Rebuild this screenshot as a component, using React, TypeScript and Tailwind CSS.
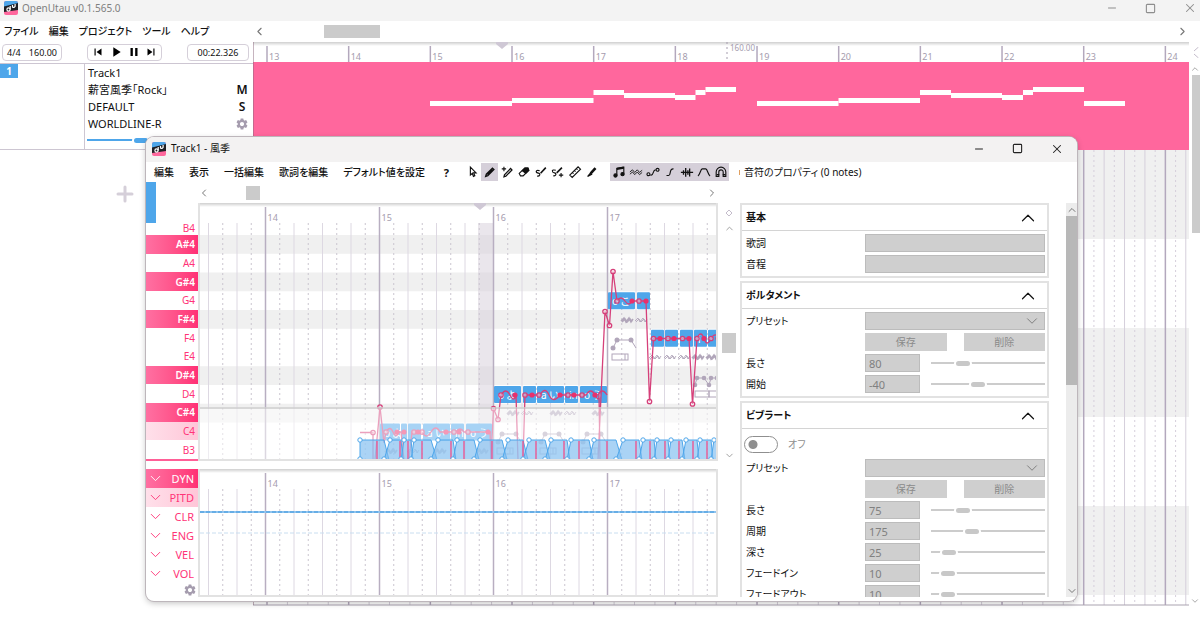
import React, { useState } from 'react';
import { ChevronDown, ChevronLeft, ChevronRight, ChevronUp, Minus, Plus, Square, X } from 'lucide-react';
import { MdPause, MdPlayArrow, MdSettings, MdSkipNext, MdSkipPrevious } from 'react-icons/md';

const MAIN_MENU = ['ファイル', '編集', 'プロジェクト', 'ツール', 'ヘルプ'];
const EDITOR_MENU = ['編集', '表示', '一括編集', '歌詞を編集', 'デフォルト値を設定'];
const KEYS = ['A#4', 'A4', 'G#4', 'G4', 'F#4', 'F4', 'E4', 'D#4', 'D4', 'C#4', 'C4', 'B3'];
const EXPRESSIONS = ['DYN', 'PITD', 'CLR', 'ENG', 'VEL', 'VOL'];

// Song timeline, one bar is BAR px wide
const BAR = 81.67;
const FIRST_BAR_X = 14;
const PART_NOTES = [
  [177, 59, 259], [259, 56, 340.5], [340.5, 48, 371], [371, 51, 422], [422, 53, 442.5],
  [442.5, 48, 452.5], [452.5, 45, 483], [504, 59, 585.5], [585.5, 56, 667], [667, 48, 698],
  [698, 51, 749], [749, 53, 770], [770, 48, 780], [780, 45, 831], [831, 59, 872],
];

// Piano roll
const ROLL_BEAT = 28.5;
const ROW = 18.75;
const ROLL_NOTES = [
  { x: 182, w: 20, row: 10, lyric: 'o よ' },
  { x: 203, w: 6, row: 10 },
  { x: 210, w: 13, row: 10 },
  { x: 225, w: 27, row: 10, lyric: 'a い' },
  { x: 253, w: 13, row: 10, lyric: 'in' },
  { x: 268, w: 26, row: 10, lyric: 'o う' },
  { x: 296, w: 27, row: 8, lyric: 'o よ' },
  { x: 325, w: 13, row: 8 },
  { x: 339, w: 27, row: 8, lyric: 'a い' },
  { x: 367, w: 13, row: 8, lyric: 'in' },
  { x: 382, w: 27, row: 8, lyric: 'o う' },
  { x: 410, w: 27, row: 3, lyric: 'o こ' },
  { x: 439, w: 13, row: 3 },
  { x: 453, w: 13, row: 5 },
  { x: 467, w: 13, row: 5 },
  { x: 482, w: 13, row: 5 },
  { x: 496, w: 13, row: 5, lyric: 'i' },
  { x: 510, w: 13, row: 5 },
];

const PITCH_LINES = [
  'M162 229.5H175V257',
  'M177 257L182 204L186 240L188 229q4 -7 7 0t6 0L203 229L206 257M211 257L214 229H224q4 8 9 0t9 0H258q4 -6 8 0H292L293 257',
  'M293 257L295.500 205.500L300 216.500L303 192q5 -8 9 0t6 0L320 257M325 257L327 192H342q5 -9 9 0t11 0H388q5 -8 9 0t4 -1L402 257M400 257L407 108.500L411.500 122.500L415 68.500L419 98q4 -6 8 0t7 0H448L451.500 198.500L455.500 135.500H491L494.500 201L499 135.500q4 -9 7 0t7 0q5 -8 9 2',
  'M409 192q-5 -8 -9 0',
];
const OPEN_POINTS = [
  [175, 229.5], [182, 204], [188, 229], [216, 229], [224, 229], [256, 229], [270, 229], [295.5, 205.5], [300, 216.5],
  [303, 192], [327, 192], [341, 192], [370, 192], [384, 192], [407, 108.5], [411.5, 122.5], [415, 68.5], [419, 98],
  [441, 98], [451.5, 198.5], [455.5, 135.5], [470, 135.5], [484.5, 135.5], [494.5, 201], [499, 135.5], [513, 135.5],
];
const SOLID_POINTS = [
  [199, 229], [206, 229], [220, 229], [248, 229], [261, 229], [290, 229], [317, 192], [334, 192], [362, 192],
  [376, 192], [397, 192], [434, 98], [448, 98], [462, 135.5], [476, 135.5], [491, 135.5], [506, 135.5], [520, 135.5],
];

const ENV_BOTTOM = [162, 186, 203, 213, 233, 255, 276, 304, 325, 347, 369, 391, 418, 441, 456, 470, 484, 499, 513, 530];
const ENV_TOP = [162, 192, 206, 216, 240, 259, 282, 310, 331, 353, 373, 396, 425, 445, 459, 473, 488, 502, 516, 534];
const PHONEME_MARKS = [179, 202, 210, 224, 253, 266, 294, 325, 338, 366, 381, 409, 438, 452, 467, 481, 495, 509];
// x, y and whether the vibrato is switched on for the note
const VIBRATOS: [number, number, boolean][] = [
  [429, 117, true], [443, 117, false], [457, 154, false], [472, 154, false], [486, 154, false], [500, 154, true],
  [514, 154, true], [315, 210, true], [329, 210, false], [358, 210, true], [372, 210, false], [400, 210, true],
  [193, 248, true], [215, 248, false], [242, 248, true], [284, 248, true],
];

const range = (n: number) => Array.from({ length: n }, (_, i) => i);

const AppIcon: React.FC = () => (
  <svg width="14" height="14" viewBox="0 0 14 14" className="shrink-0">
    <rect width="14" height="14" rx="2" fill="#ff679d" />
    <path d="M0 7V2q0-2 2-2h10q2 0 2 2v2z" fill="#4ea6ea" />
    <path d="M0 5.500L14 2v7L0 11z" fill="#1f1f25" />
    <circle cx="4.500" cy="8.500" r="1.600" fill="none" stroke="#fff" strokeWidth="1.200" />
    <path d="M6.200 8.500V5M8.500 4v2q1.600 1 2.600-.6V3" fill="none" stroke="#fff" strokeWidth="1.200" />
  </svg>
);

const WindowButtons: React.FC<{ color: string; edge: string }> = ({ color, edge }) => (
  <div className={`ml-auto flex items-center gap-[27px] ${color} ${edge}`}>
    <button aria-label="Minimize"><Minus size={12} strokeWidth={2} /></button>
    <button aria-label="Maximize"><Square size={11} strokeWidth={2.4} /></button>
    <button aria-label="Close"><X size={14} strokeWidth={1.8} /></button>
  </div>
);

const TOOLS: { name: string; art: React.ReactNode }[] = [
  { name: 'Select', art: <path d="M5 2.500v9l2.200-2 1.300 3.500 1.600-.7-1.400-3.300h2.800z" /> },
  { name: 'Pencil', art: <path d="M3 13l.8-2.500L10.800 3.500l1.700 1.700L5.500 12.200zM5 11l6-6" strokeWidth="1.500" /> },
  { name: 'Pencil plus', art: <><path d="M4.500 13.500l.6-2.200 7-7.300 1.600 1.600-7 7.200z" strokeWidth="1.400" /><path d="M4.500 2v5M2 4.500h5M8 2.500h.1" /></> },
  { name: 'Eraser', art: <><path d="M2.500 9.500L9 3.500h3.500l1 2.500-6.500 6.500H4z" /><path d="M6 6.500L9 3.500h3.500l1 2.500-3.500 3.500z" fill="currentColor" /></> },
  { name: 'Curve', art: <><path d="M6.500 6.500C1 5 2 9 5 9.300s1.500 4-1.500 3.200" /><path d="M7.500 9.500l6-6.500" strokeWidth="1.800" /></> },
  { name: 'Curve plus', art: <><path d="M5.500 6C0 4.500 1 8.500 4 9s1.500 4-1.500 3.200" /><path d="M6.500 9l6-6" strokeWidth="1.800" /><path d="M11.500 9v5M9 11.500h5" /></> },
  { name: 'Ruler', art: <path d="M2 11.500L11.500 2l2.800 2.800-9.500 9.500zM5 8.500l1.300 1.300M7.300 6.200l1.300 1.300M9.600 4l1.300 1.300" /> },
  { name: 'Knife', art: <><path d="M6.500 9.500l5.500-6" strokeWidth="3" /><path d="M3 13l3-3.500 1.500 1.200z" fill="currentColor" /></> },
];

const VIEWS: { name: string; art: React.ReactNode }[] = [
  { name: 'Notes', art: <><path d="M5.500 12V4l8-1.500v8" /><path d="M5.500 4.500l8-1.500" strokeWidth="2.600" /><circle cx="4" cy="12" r="1.800" fill="currentColor" /><circle cx="12" cy="10.500" r="1.800" fill="currentColor" /></> },
  { name: 'Vibrato', art: <path d="M1 8l3-2.500 2.500 3 3-3 2.500 3 3-2.500M1 10.500l3-2.500 2.500 3 3-3 2.500 3 3-2.500" strokeWidth="1" /> },
  { name: 'Pitch', art: <><circle cx="2.800" cy="10.500" r="1.700" /><circle cx="13.200" cy="5.500" r="1.700" /><path d="M5 11.500h1c3 0 1.500-6 5-6" /></> },
  { name: 'Final pitch', art: <path d="M4 12h2.500c3 0 0-8 5.500-7.500" /> },
  { name: 'Waveform', art: <path d="M1 8.500h14M4 6v5M6.500 3.500v10M9 6v5M11 4v9" strokeWidth="1.500" /> },
  { name: 'Envelope', art: <path d="M1 12.500c2.500-1 3-8 5-8h4c2 0 2.500 7 5 8" /> },
  { name: 'Snap', art: <><path d="M2.500 13V8a5.500 5.500 0 0 1 11 0v5h-3V8a2.500 2.500 0 0 0-5 0v5z" /><path d="M3 11h3M10 11h3" /></> },
];

const ToolIcon: React.FC<{ children: React.ReactNode }> = ({ children }) => (
  <svg width="14" height="14" viewBox="0 0 16 16" fill="none" stroke="currentColor" strokeWidth="1.3">
    {children}
  </svg>
);

const SongTimeline: React.FC = () => (
  <svg className="block h-full w-full" role="img" aria-label="Song timeline">
    <defs>
      <linearGradient id="shade" x1="0" y1="0" x2="0" y2="1">
        <stop offset="0" stopColor="#cfcfcf" />
        <stop offset="1" stopColor="#fff" />
      </linearGradient>
    </defs>
    {[0, 2, 4].map(i => (
      <rect key={i} x="0" y={108 + i * 89} width="100%" height="89" fill="#f0f0f0" />
    ))}
    {range(140).map(i => (
      <line
        key={i}
        x1={FIRST_BAR_X - BAR + i * (BAR / 8)}
        x2={FIRST_BAR_X - BAR + i * (BAR / 8)}
        y1="108"
        y2="563"
        stroke={i % 8 === 0 ? '#b3a8bd' : '#d5cfdb'}
        strokeWidth={i % 8 === 0 ? 1.5 : 1}
        strokeDasharray={i % 2 ? '2 3' : undefined}
      />
    ))}
    {range(12).map(i => (
      <g key={i}>
        <line x1={FIRST_BAR_X + i * BAR} x2={FIRST_BAR_X + i * BAR} y1="0" y2="20" stroke="#b3a8bd" strokeWidth="1.500" />
        <text x={FIRST_BAR_X + 2 + i * BAR} y="18" fontSize="9" fill="#a59cae">{13 + i}</text>
      </g>
    ))}
    <rect width="100%" height="4" fill="url(#shade)" />
    <path d="M243 0h12v2l-6 5-6-5z" fill="#cfc8d5" />
    <line x1="474" x2="474" y1="0" y2="20" stroke="#a59cae" strokeDasharray="2 3" />
    <text x="477" y="9" fontSize="8" fill="#a59cae">160.00</text>
    <rect y="20" width="100%" height="88" fill="#ff679d" />
    {PART_NOTES.map(([x1, y, x2]) => (
      <rect key={x1} x={x1} y={y} width={x2 - x1} height="5" fill="#fff" />
    ))}
    <line x1="0" x2="100%" y1="563" y2="563" stroke="#aaa3b0" />
    <line x1="0.500" x2="0.500" y1="0" y2="563" stroke="#8d6a80" strokeOpacity=".5" />
  </svg>
);

const RollGrid: React.FC<{ top: number; bottom: number }> = ({ top, bottom }) => (
  <>
    {range(39).map(i => {
      const x = 65.5 - ROLL_BEAT * 2 + i * (ROLL_BEAT / 2);
      const isBar = i % 8 === 4;
      return (
        <g key={i}>
          <line
            x1={x}
            x2={x}
            y1={isBar ? 0 : top}
            y2={bottom}
            stroke={isBar ? '#b8aec1' : i % 2 ? '#cac5cf' : '#ddd8e2'}
            strokeWidth={isBar ? 1.5 : 1}
            strokeDasharray={i % 2 ? '2 3' : undefined}
          />
          {isBar && <text x={x + 2} y={top - 2} fontSize="9" fill="#a59cae">{14 + (i - 4) / 8}</text>}
        </g>
      );
    })}
  </>
);

const PianoRoll: React.FC = () => (
  <svg className="block h-[258px] w-full border-x-2 border-b-2 border-[#e2e2e2]" role="img" aria-label="Piano roll">
    {[0, 2, 4, 7, 9].map(r => (
      <rect key={r} y={32 + r * ROW} width="100%" height={ROW} fill="#f0f0f0" />
    ))}
    <rect x="278" y="20" width="15" height="238" fill="#d8d2dc" fillOpacity=".55" />
    <RollGrid top={20} bottom={258} />
    <rect width="100%" height="4" fill="url(#shade)" />
    <path d="M274 0h12v2l-6 5-6-5z" fill="#cfc8d5" />
    {ROLL_NOTES.map(n => (
      <g key={n.x}>
        <rect x={n.x - 2} y={33 + n.row * ROW} width={n.w} height="17" rx="1" fill="#4ea6ea" />
        {n.lyric && (
          <text x={n.x + 2} y={46 + n.row * ROW} fontSize="10" fill="#fff">{n.lyric}</text>
        )}
      </g>
    ))}
    <g transform="translate(-2 0)" fill="none" stroke="#b1a6ba">
      {VIBRATOS.map(([x, y, on]) => (
        <path
          key={`${x}-${y}`}
          d={`M${x - 6} ${y + 1}l3 -3l2 4l3 -4l2 4l2 -3M${x - 5} ${y + 2}l3 -3l2 3l3 -3l2 3`}
          strokeWidth={on ? 1.6 : 0.9}
        />
      ))}
      {[[415, 145], [300, 239], [343, 239], [385, 239]].map(([x, y]) => (
        <g key={x}>
          <path d={`M${x} ${y}l4 -8h14l5 8`} />
          <rect x={x - 1} y={y + 6} width="16" height="6" />
          <path d={`M${x + 12} ${y + 6}v6`} />
          <g fill="#b1a6ba" stroke="none">
            <circle cx={x} cy={y} r="2.500" />
            <circle cx={x + 4} cy={y - 8} r="2.500" />
            <circle cx={x + 18} cy={y - 8} r="2.500" />
          </g>
        </g>
      ))}
      <path d="M497 182l2-7h7l5 7 2-7h8" />
      <rect x="497" y="188" width="14" height="6" />
      <rect x="511" y="188" width="14" height="6" />
      {[[497, 182], [499, 175], [506, 175], [511, 182], [513, 175], [519, 175]].map(([x, y]) => (
        <circle key={x} cx={x} cy={y} r="2.300" fill="#b1a6ba" stroke="none" />
      ))}
    </g>
    <g transform="translate(-2 0)" stroke="#d6407a" strokeWidth="1.300">
      {PITCH_LINES.map(d => <path key={d} d={d} fill="none" />)}
      {OPEN_POINTS.map(([x, y]) => <circle key={`${x}-${y}`} cx={x} cy={y} r="2.200" fill="#fff" fillOpacity=".4" />)}
      {SOLID_POINTS.map(([x, y]) => <circle key={`${x}-${y}`} cx={x} cy={y} r="2.600" fill="#e8306c" stroke="none" />)}
    </g>
    {/* waveform strip dims whatever is behind it */}
    <rect y="206" width="100%" height="52" fill="#fff" fillOpacity=".5" />
    <rect y="204" width="100%" height="2" fill="#cfcfcf" fillOpacity=".75" />
    <g transform="translate(-2 0)">
      {ENV_BOTTOM.slice(0, -1).map((b, i) => (
        <path
          key={b}
          d={`M${b} 257L${ENV_TOP[i]} 237H${ENV_BOTTOM[i + 1]}L${ENV_TOP[i + 1] - 1} 257z`}
          fill="#7dbcf0"
          fillOpacity=".65"
          stroke="#4ea6ea"
        />
      ))}
      {PHONEME_MARKS.map(x => (
        <line key={x} x1={x} x2={x} y1="238" y2="256" stroke="#f04f8c" strokeWidth="1.300" />
      ))}
      <g fill="#fff" stroke="#4ea6ea">
        {ENV_TOP.map(x => <circle key={x} cx={x} cy="237" r="2.200" />)}
        {ENV_BOTTOM.map(x => <circle key={x} cx={x} cy="256" r="2.200" />)}
      </g>
    </g>
  </svg>
);

const ExpressionCanvas: React.FC = () => (
  <svg className="block min-h-0 w-full flex-1 border-x-2 border-b-2 border-[#e2e2e2]" role="img" aria-label="Expression curve">
    <RollGrid top={20} bottom={140} />
    <rect width="100%" height="4" fill="url(#shade)" />
    <line x1="0" x2="100%" y1="43" y2="43" stroke="#8fc4ef" strokeWidth="2" />
    <line x1="0" x2="100%" y1="43" y2="43" stroke="#3f97dc" strokeDasharray="4 2" />
    <line x1="0" x2="100%" y1="64" y2="64" stroke="#c9def0" strokeDasharray="4 2" />
  </svg>
);

const Card: React.FC<{ title: string; children: React.ReactNode }> = ({ title, children }) => (
  <section className="border-2 border-[#e2e2e2] bg-white">
    <button className="flex h-[26px] w-full items-center justify-between border-b border-[#d4d4d4] pr-2 pl-1 font-bold">
      {title}
      <ChevronUp size={22} strokeWidth={1.3} />
    </button>
    <div className="flex flex-col gap-[3px] py-[3px] pr-[2px] pl-1">{children}</div>
  </section>
);

const GrayBox = 'h-[18px] w-full border border-[#bcbcbc] bg-[#cfcfcf]';

const TextRow: React.FC<{ label: string }> = ({ label }) => (
  <label className="flex items-center">
    <span className="w-[119px] shrink-0">{label}</span>
    <input type="text" disabled className={GrayBox} />
  </label>
);

const PresetRows: React.FC = () => (
  <>
    <label className="relative flex items-center">
      <span className="w-[119px] shrink-0">プリセット</span>
      <select disabled className={`${GrayBox} appearance-none`} />
      <ChevronDown size={18} strokeWidth={1.2} className="pointer-events-none absolute right-1 text-[#777]" />
    </label>
    <div className="flex gap-[17px] pl-[119px] text-[#8a8a8a]">
      <button disabled className="h-[18px] flex-1 bg-[#cfcfcf]">保存</button>
      <button disabled className="h-[18px] flex-1 bg-[#cfcfcf]">削除</button>
    </div>
  </>
);

const ValueRow: React.FC<{ label: string; value: string; position: number }> = ({ label, value, position }) => (
  <label className="flex items-center">
    <span className="w-[119px] shrink-0">{label}</span>
    <input
      type="text"
      disabled
      value={value}
      className="h-[18px] w-[55px] shrink-0 border border-[#bcbcbc] bg-[#cfcfcf] px-[3px] text-[11px] text-[#808080]"
    />
    <input
      type="range"
      disabled
      aria-label={label}
      value={position}
      className="ml-[11px] h-[13px] w-0 flex-1 appearance-none bg-[linear-gradient(#ccc,#ccc)] bg-[length:100%_2px] bg-center bg-no-repeat [&::-webkit-slider-thumb]:h-[5px] [&::-webkit-slider-thumb]:w-[14px] [&::-webkit-slider-thumb]:appearance-none [&::-webkit-slider-thumb]:rounded-sm [&::-webkit-slider-thumb]:bg-[#c8c8c8] [&::-webkit-slider-thumb]:shadow-[0_0_0_2px_white]"
    />
  </label>
);

const PropertiesPanel: React.FC = () => {
  const [vibrato, setVibrato] = useState(false);

  return (
    <div className="flex min-h-0 flex-1 pb-1">
      <div className="flex min-w-0 flex-1 flex-col gap-[3px] overflow-hidden">
        <Card title="基本">
          <TextRow label="歌詞" />
          <TextRow label="音程" />
        </Card>
        <Card title="ポルタメント">
          <PresetRows />
          <ValueRow label="長さ" value="80" position={25} />
          <ValueRow label="開始" value="-40" position={40} />
        </Card>
        <Card title="ビブラート">
          <label className="flex h-6 items-center gap-[10px] text-[#8f8f8f]">
            <input
              type="checkbox"
              role="switch"
              checked={vibrato}
              onChange={e => setVibrato(e.target.checked)}
              className="-ml-[2px] h-[17px] w-[34px] appearance-none rounded-full border border-[#8f8f8f] bg-[radial-gradient(circle_at_8px_50%,#8f8f8f_4px,transparent_5px)] checked:bg-[#4ea6ea]"
            />
            オフ
          </label>
          <PresetRows />
          <ValueRow label="長さ" value="75" position={25} />
          <ValueRow label="周期" value="175" position={34} />
          <ValueRow label="深さ" value="25" position={11} />
          <ValueRow label="フェードイン" value="10" position={10} />
          <ValueRow label="フェードアウト" value="10" position={10} />
        </Card>
      </div>
      {/* Scrollbar */}
      <div className="ml-[17px] flex w-[11px] flex-col items-center bg-[#ececec] text-[#777]">
        <button aria-label="Scroll up" className="flex h-[13px] items-center"><ChevronUp size={12} /></button>
        <div className="h-[169px] w-full bg-[#b8b8b8]"></div>
        <button aria-label="Scroll down" className="mt-auto flex h-[13px] items-center"><ChevronDown size={12} /></button>
      </div>
    </div>
  );
};

const EditorWindow: React.FC = () => {
  const [tool, setTool] = useState('Pencil');

  return (
    <div
      role="dialog"
      aria-label="Track1 - 風季"
      className="absolute top-[137px] right-[123px] bottom-[19px] left-[146px] flex flex-col overflow-hidden rounded-lg bg-white shadow-[0_0_0_1px_#bdb6bb,0_2px_6px_rgba(0,0,0,0.25)]"
    >
      <header className="flex h-[25px] shrink-0 items-center gap-[5px] bg-[#f3f2f2] pb-[2px] pl-[6px]">
        <AppIcon />
        <h2 className="text-[10px]">Track1 - 風季</h2>
        <WindowButtons color="text-[#222]" edge="pr-[13px]" />
      </header>

      <div className="flex min-h-0 flex-1">
        <div className="flex min-w-0 flex-1 flex-col">
          {/* Menu and tools */}
          <div className="flex h-[20px] shrink-0 items-center pl-2">
            <nav className="flex gap-[15px] text-[10px] font-medium whitespace-nowrap">
              {EDITOR_MENU.map(item => <button key={item}>{item}</button>)}
            </nav>
            <button className="ml-auto font-bold">?</button>
            <div className="ml-[15px] flex">
              {TOOLS.map(t => (
                <button
                  key={t.name}
                  aria-label={t.name}
                  onClick={() => setTool(t.name)}
                  className={`flex h-[18px] w-[17px] items-center justify-center ${tool === t.name ? 'bg-[#d5cfd9]' : ''}`}
                >
                  <ToolIcon>{t.art}</ToolIcon>
                </button>
              ))}
            </div>
            <div className="mr-[11px] ml-[10px] flex bg-[#d5cfd9]">
              {VIEWS.map(v => (
                <button key={v.name} aria-label={v.name} className="flex h-[18px] w-[17px] items-center justify-center">
                  <ToolIcon>{v.art}</ToolIcon>
                </button>
              ))}
            </div>
          </div>

          <div className="flex min-h-0 flex-1">
            {/* Keyboard */}
            <div className="flex w-[52px] shrink-0 flex-col">
              <div className="h-[41px] w-[10px] shrink-0 bg-[#4ea6ea]"></div>
              <div className="flex h-[238px] shrink-0 flex-col border-b-2 border-[#ff5f97] text-right text-[10px] text-[#ff3377]">
                <div className="flex h-[12px] shrink-0 items-start justify-end pr-[3px] leading-none">B4</div>
                {KEYS.map(k => (
                  <div
                    key={k}
                    className={`flex min-h-0 flex-1 items-center justify-end pr-[3px] leading-none ${
                      k.includes('#')
                        ? 'bg-linear-to-r from-[#ff70a2] to-[#ff2f75] font-semibold text-white'
                        : k === 'C4' ? 'bg-linear-to-r from-[#ffe0ea] to-[#ffc6d8]' : ''
                    }`}
                  >
                    {k}
                  </div>
                ))}
              </div>
              <div className="mt-2 flex flex-col">
                {EXPRESSIONS.map(e => (
                  <button
                    key={e}
                    className={`flex h-[19px] items-center justify-between pr-1 pl-px ${
                      e === 'DYN'
                        ? 'bg-linear-to-r from-[#ff70a2] to-[#ff2f75] text-white'
                        : e === 'PITD' ? 'bg-linear-to-r from-[#ffe0ea] to-[#ffc6d8] text-[#ff3377]' : 'text-[#ff3377]'
                    }`}
                  >
                    <ChevronDown size={17} strokeWidth={1.3} />
                    {e}
                  </button>
                ))}
                <button aria-label="Expression settings" className="mr-[1px] ml-auto text-[#a59cae]"><MdSettings size={14} /></button>
              </div>
            </div>

            {/* Canvases */}
            <div className="flex min-w-0 flex-1 flex-col pb-1">
              <div className="flex h-[21px] shrink-0 items-center justify-between text-[#777]">
                <button aria-label="Scroll left"><ChevronLeft size={12} /></button>
                <div className="mr-auto ml-9 h-[14px] w-[14px] bg-[#cbcbcb]"></div>
                <button aria-label="Scroll right"><ChevronRight size={12} /></button>
              </div>
              <PianoRoll />
              <div className="h-2 shrink-0"></div>
              <ExpressionCanvas />
            </div>

            {/* Vertical scroll */}
            <div className="flex h-[279px] w-[22px] shrink-0 flex-col items-center pt-[27px] text-[#999]">
              <svg width="8" height="8" viewBox="0 0 8 8" fill="none" stroke="#c4bccb"><path d="M4 1l3 3-3 3-3-3z" /></svg>
              <button aria-label="Scroll up" className="mt-[6px]"><ChevronUp size={11} /></button>
              <div className="mt-[99px] h-5 w-[14px] bg-[#cbcbcb]"></div>
              <button aria-label="Scroll down" className="mt-auto"><ChevronDown size={11} /></button>
            </div>
          </div>
        </div>

        {/* Properties */}
        <aside className="flex w-[337px] shrink-0 flex-col text-[10px]">
          <h3 className="mb-[21px] flex h-5 shrink-0 items-center gap-1 whitespace-nowrap">
            <span className="-ml-px h-[5px] w-px bg-[#e0a060]"></span>
            音符のプロパティ (0 notes)
          </h3>
          <PropertiesPanel />
        </aside>
      </div>
    </div>
  );
};

export default function App() {
  return (
    <div className="relative flex h-screen min-h-[620px] flex-col bg-white pb-[14px] font-['Noto_Sans','Noto_Sans_CJK_JP',sans-serif] text-[11px] leading-[17px] text-[#111] [font-feature-settings:'palt']">
      <header className="flex h-[21px] shrink-0 items-center gap-1 bg-[#f3f3f3] pb-[5px] pl-1 text-[#808080]">
        <AppIcon />
        <h1 className="text-[10px]">OpenUtau v0.1.565.0</h1>
        <WindowButtons color="text-[#8d8d8d]" edge="pr-[3px]" />
      </header>

      <div className="flex min-h-0 flex-1">
        {/* Track list */}
        <div className="flex w-[253px] shrink-0 flex-col">
          <nav className="flex h-[21px] items-center gap-[10px] pl-1 text-[10px] font-medium whitespace-nowrap">
            {MAIN_MENU.map(item => <button key={item}>{item}</button>)}
          </nav>
          <div className="flex h-5 items-center justify-between px-[2px] pr-1">
            <div className="flex h-[17px] w-[60px] items-center justify-between rounded border border-[#d5cfd9] px-1 text-[9px]">
              <span>4/4</span>
              <span>160.00</span>
            </div>
            <div className="flex h-[17px] w-[75px] items-center justify-around rounded border border-[#d5cfd9] px-[2px] text-black">
              <button aria-label="Previous"><MdSkipPrevious size={14} /></button>
              <button aria-label="Play"><MdPlayArrow size={16} /></button>
              <button aria-label="Pause"><MdPause size={14} /></button>
              <button aria-label="Next"><MdSkipNext size={14} /></button>
            </div>
            <div className="flex h-[17px] w-[62px] items-center justify-center rounded border border-[#d5cfd9] text-[9px]">00:22.326</div>
          </div>
          <div className="mt-px flex h-[87px] border-y border-[#cdc6d2]">
            <div className="w-[84px] shrink-0">
              <div className="h-[14px] w-[18px] bg-[#4ea6ea] text-center text-[10px] leading-[14px] font-bold text-white">1</div>
            </div>
            <div className="min-w-0 flex-1 border-l border-[#cdc6d2] pr-1 pl-[3px]">
              <div className="flex h-[17px] items-center">Track1</div>
              <div className="flex h-[17px] items-center justify-between">
                薪宮風季「Rock」
                <button className="w-[14px] text-center text-[12px] font-semibold">M</button>
              </div>
              <div className="flex h-[17px] items-center justify-between">
                DEFAULT
                <button className="w-[14px] text-center text-[12px] font-semibold">S</button>
              </div>
              <div className="flex h-[17px] items-center justify-between">
                WORLDLINE-R
                <button aria-label="Track settings" className="w-[14px] text-[#a59cae]"><MdSettings size={14} /></button>
              </div>
              <input
                type="range"
                aria-label="Volume"
                defaultValue={32}
                className="-ml-px block h-[17px] w-full appearance-none bg-[linear-gradient(#4ea6ea,#4ea6ea)] bg-[length:100%_2px] bg-[left_7px] bg-no-repeat [&::-webkit-slider-thumb]:-mt-px [&::-webkit-slider-thumb]:h-[5px] [&::-webkit-slider-thumb]:w-[14px] [&::-webkit-slider-thumb]:appearance-none [&::-webkit-slider-thumb]:rounded-sm [&::-webkit-slider-thumb]:bg-[#4ea6ea] [&::-webkit-slider-thumb]:shadow-[0_0_0_2px_white]"
              />
            </div>
          </div>
          <button aria-label="Add track" className="mt-8 ml-[113px] w-6 text-[#d5cfd9]"><Plus size={24} strokeWidth={3} /></button>
        </div>

        {/* Song timeline */}
        <div className="flex min-w-0 flex-1 flex-col">
          <div className="flex h-[21px] shrink-0 items-center justify-between text-[#777]">
            <button aria-label="Scroll left"><ChevronLeft size={13} /></button>
            <div className="mr-auto ml-[58px] h-[13px] w-[56px] bg-[#cbcbcb]"></div>
            <button aria-label="Scroll right"><ChevronRight size={13} /></button>
          </div>
          <div className="min-h-0 flex-1">
            <SongTimeline />
          </div>
        </div>

        <div className="flex w-[11px] shrink-0 flex-col items-end overflow-hidden pt-[26px] text-[#999]">
          <svg width="8" height="11" viewBox="0 0 8 11" fill="none" stroke="#c4bccb" className="shrink-0"><path d="M6.500 0L2 4M2 7l4.500 4" /></svg>
          <button aria-label="Scroll up"><ChevronUp size={10} className="mt-[6px]" /></button>
          <div className="mt-px h-[158px] w-2 bg-[#cbcbcb]"></div>
          <button aria-label="Scroll down" className="mt-auto"><ChevronDown size={10} /></button>
        </div>
      </div>

      <EditorWindow />
    </div>
  );
}
